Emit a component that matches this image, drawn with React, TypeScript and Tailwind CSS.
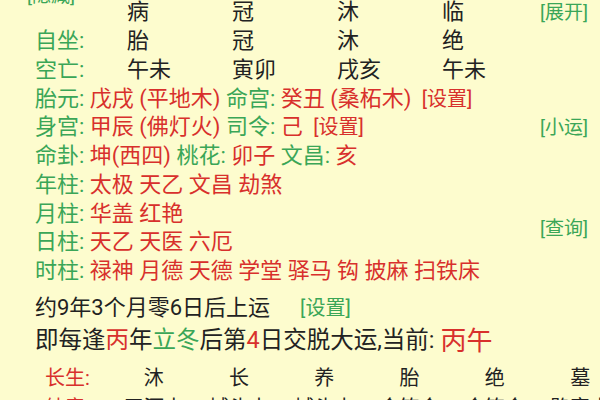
const green = "text-[#3aa657]";
const red = "text-[#d8302c]";

const topCols = [
  { label: "", cells: ["病", "冠", "沐", "临"] },
  { label: "自坐:", cells: ["胎", "冠", "沐", "绝"] },
  { label: "空亡:", cells: ["午未", "寅卯", "戌亥", "午未"] },
];

type Part = { t: string; c: "g" | "r" | "rs" };

const infoRows: { label: string; parts: Part[] }[] = [
  {
    label: "胎元:",
    parts: [
      { t: "戊戌 (平地木) ", c: "r" },
      { t: "命宫: ", c: "g" },
      { t: "癸丑 (桑柘木) ", c: "r" },
      { t: " [设置]", c: "rs" },
    ],
  },
  {
    label: "身宫:",
    parts: [
      { t: "甲辰 (佛灯火) ", c: "r" },
      { t: "司令: ", c: "g" },
      { t: "己 ", c: "r" },
      { t: " [设置]", c: "rs" },
    ],
  },
  {
    label: "命卦:",
    parts: [
      { t: "坤(西四) ", c: "r" },
      { t: "桃花: ", c: "g" },
      { t: "卯子 ", c: "r" },
      { t: "文昌: ", c: "g" },
      { t: "亥", c: "r" },
    ],
  },
  { label: "年柱:", parts: [{ t: "太极 天乙 文昌 劫煞", c: "r" }] },
  { label: "月柱:", parts: [{ t: "华盖 红艳", c: "r" }] },
  { label: "日柱:", parts: [{ t: "天乙 天医 六厄", c: "r" }] },
  { label: "时柱:", parts: [{ t: "禄神 月德 天德 学堂 驿马 钩 披麻 扫铁床", c: "r" }] },
];

const changsheng = ["沐", "长", "养", "胎", "绝", "墓"];
const nayin = ["天河水", "城头土", "城头土", "金箔金", "金箔金", "路旁土"];

export default function App() {
  return (
    <div className="w-[600px] h-[400px] overflow-hidden bg-[#fdfcce] text-[#222] font-['Roboto','Noto_Sans_CJK_SC',sans-serif]">
      {/* upper block: rows + right-side links */}
      <div className="flex mt-[-2px]">
        <div className="flex-1 min-w-0 pl-[35px] text-[22px]">
          {topCols.map((row, i) => (
            <div key={i} className="flex h-[28.75px] items-center leading-none">
              <div className={`w-[92px] shrink-0 ${green}`}>
                {i === 0 ? (
                  <span className="relative -top-[17px] -left-[8px] text-[19px] whitespace-nowrap">[隐藏]</span>
                ) : (
                  row.label
                )}
              </div>
              {row.cells.map((c, j) => (
                <div key={j} className="w-[105px] shrink-0">
                  {c}
                </div>
              ))}
            </div>
          ))}
          {infoRows.map((row) => (
            <div key={row.label} className="flex h-[28.75px] items-center whitespace-pre leading-none">
              <span className={green}>{row.label} </span>
              {row.parts.map((p, j) => (
                <span
                  key={j}
                  className={p.c === "g" ? green : p.c === "rs" ? `${red} text-[20px]` : red}
                >
                  {p.t}
                </span>
              ))}
            </div>
          ))}
        </div>
        <div className={`shrink-0 whitespace-nowrap flex flex-col items-end pr-[12px] text-[19px] leading-none ${green}`}>
          <div className="h-[28.75px] flex items-center">[展开]</div>
          <div className="h-[86.25px]" />
          <div className="h-[28.75px] flex items-center">[小运]</div>
          <div className="h-[71.9px]" />
          <div className="h-[28.75px] flex items-center">[查询]</div>
        </div>
      </div>

      {/* start of luck */}
      <div className="pl-[35px] mt-[6px] h-[32px] flex items-center text-[22px] leading-none whitespace-pre">
        <span>约9年3个月零6日后上运</span>
        <span className={`ml-[30px] text-[20px] ${green}`}>[设置]</span>
      </div>
      <div className="pl-[35px] h-[35px] flex items-center text-[23.5px] leading-none whitespace-pre">
        <span>即每逢</span>
        <span className={red}>丙</span>
        <span>年</span>
        <span className={green}>立冬</span>
        <span>后第</span>
        <span className={red}>4</span>
        <span>日交脱大运,当前: </span>
        <span className={`${red} text-[26px]`}>丙午</span>
      </div>

      {/* twelve stages / nayin */}
      <div className="mt-[5px] pl-[45px] text-[20px] leading-none">
        <div className="flex h-[28px] items-center">
          <div className={`w-[66px] shrink-0 ${red}`}>长生:</div>
          {changsheng.map((c, i) => (
            <div key={i} className="w-[85.3px] shrink-0 text-center">
              {c}
            </div>
          ))}
        </div>
        <div className="flex h-[28px] mt-[2px] items-center">
          <div className={`w-[66px] shrink-0 ${red}`}>纳音:</div>
          {nayin.map((c, i) => (
            <div key={i} className="w-[85.3px] shrink-0 text-center">
              {c}
            </div>
          ))}
        </div>
      </div>
    </div>
  );
}
